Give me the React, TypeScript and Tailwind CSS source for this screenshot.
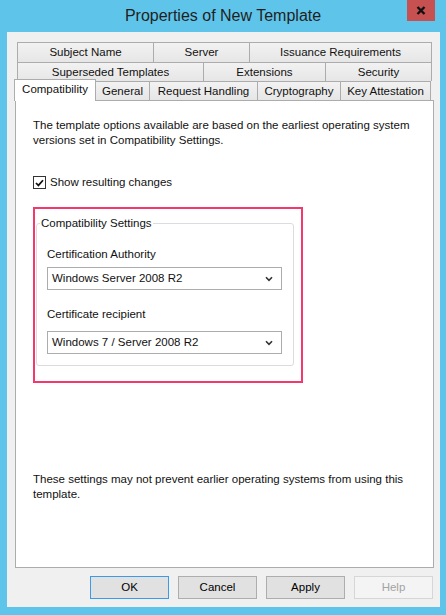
const tabBase =
  "flex items-center justify-center border-t border-l border-[#acacac] bg-linear-to-b from-[#f2f2f2] to-[#e6e6e6] whitespace-nowrap";

function Tab({ label, width, last }: { label: string; width: string; last?: boolean }) {
  return <div className={`${tabBase} ${width} ${last ? "border-r" : ""}`}>{label}</div>;
}

function Select({ value }: { value: string }) {
  return (
    <div className="flex items-center justify-between w-[235px] h-[23px] bg-white border border-[#acacac] pl-[4px] pr-[8px]">
      <span>{value}</span>
      <svg width="8" height="6" viewBox="0 0 8 6">
        <path d="M1 1.2 L4 4.3 L7 1.2" fill="none" stroke="#333" strokeWidth="1.6" />
      </svg>
    </div>
  );
}

function Button({ label, kind }: { label: string; kind?: "default" | "disabled" }) {
  const look =
    kind === "default"
      ? "border-[#3c9be8] bg-[#e1e1e1] text-black"
      : kind === "disabled"
        ? "border-[#d6d6d6] bg-[#f4f4f4] text-[#a3a3a3]"
        : "border-[#adadad] bg-[#e1e1e1] text-black";
  return (
    <div className={`flex items-center justify-center w-[79px] h-[23px] border ${look}`}>{label}</div>
  );
}

export default function App() {
  return (
    <div className="w-[446px] h-[615px] bg-[#5fc4ea] flex flex-col font-['Liberation_Sans',Arial,sans-serif] text-[11.5px] leading-[15px] text-[#111]">
      {/* title bar */}
      <div className="relative h-[32px] flex items-center justify-center">
        <span className="text-[16px] text-[#1f1f1f] pb-[1px]">Properties of New Template</span>
        <div className="absolute right-[11px] top-0 w-[28px] h-[21px] bg-[#c75050] flex items-center justify-center">
          <svg width="10" height="9" viewBox="0 0 10 9">
            <path d="M1.5 1 L8.5 8 M8.5 1 L1.5 8" stroke="#111" strokeWidth="2.4" />
          </svg>
        </div>
      </div>

      <div className="ml-[7px] mr-[6px] h-[575px] bg-[#f0f0f0] pt-[10px] pl-[8px] pr-[6px] flex flex-col">
        {/* tabs */}
        <div className="ml-[2px] flex h-[20px]">
          <Tab label="Subject Name" width="w-[136px]" />
          <Tab label="Server" width="w-[96px]" />
          <Tab label="Issuance Requirements" width="w-[183px]" last />
        </div>
        <div className="ml-[2px] flex h-[19px]">
          <Tab label="Superseded Templates" width="w-[186px]" />
          <Tab label="Extensions" width="w-[122px]" />
          <Tab label="Security" width="w-[107px]" last />
        </div>
        <div className="ml-[2px] flex items-end h-[19px]">
          <div className="relative z-10 -ml-[3px] -mb-px w-[82px] h-[22px] bg-white border-t border-l border-r border-[#acacac] flex items-center justify-center pb-[2px]">
            Compatibility
          </div>
          <Tab label="General" width="w-[54px] h-[19px] -ml-px" />
          <Tab label="Request Handling" width="w-[108px] h-[19px]" />
          <Tab label="Cryptography" width="w-[83px] h-[19px]" />
          <Tab label="Key Attestation" width="w-[91px] h-[19px]" last />
        </div>

        {/* panel */}
        <div className="h-[468px] bg-white border border-[#acacac] pl-[17px] pt-[17px] flex flex-col">
          <p className="whitespace-nowrap">
            The template options available are based on the earliest operating system
            <br />
            versions set in Compatibility Settings.
          </p>

          <div className="mt-[27px] flex items-center h-[15px]">
            <div className="w-[13px] h-[13px] border border-[#333] bg-white flex items-center justify-center">
              <svg width="9" height="8" viewBox="0 0 9 8">
                <path d="M1 4 L3.4 6.4 L8 1.2" fill="none" stroke="#111" strokeWidth="1.7" />
              </svg>
            </div>
            <span className="ml-[4px]">Show resulting changes</span>
          </div>

          <div className="mt-[17px] w-[270px] h-[176px] border-2 border-[#f2386d]">
            <fieldset className="ml-[1px] mt-[7px] w-[258px] border border-[#dcdcdc] rounded-[3px] pl-[10px] pb-[11px]">
              <legend className="-ml-[7px] px-[1px]">Compatibility Settings</legend>
              <div className="mt-[16px]">Certification Authority</div>
              <div className="mt-[5px]">
                <Select value="Windows Server 2008 R2" />
              </div>
              <div className="mt-[17px]">Certificate recipient</div>
              <div className="mt-[9px]">
                <Select value="Windows 7 / Server 2008 R2" />
              </div>
            </fieldset>
          </div>

          <p className="mt-[89px] whitespace-nowrap">
            These settings may not prevent earlier operating systems from using this
            <br />
            template.
          </p>
        </div>

        {/* buttons */}
        <div className="mt-[8px] flex justify-end gap-[9px] pr-[1px]">
          <Button label="OK" kind="default" />
          <Button label="Cancel" />
          <Button label="Apply" />
          <Button label="Help" kind="disabled" />
        </div>
      </div>
    </div>
  );
}
